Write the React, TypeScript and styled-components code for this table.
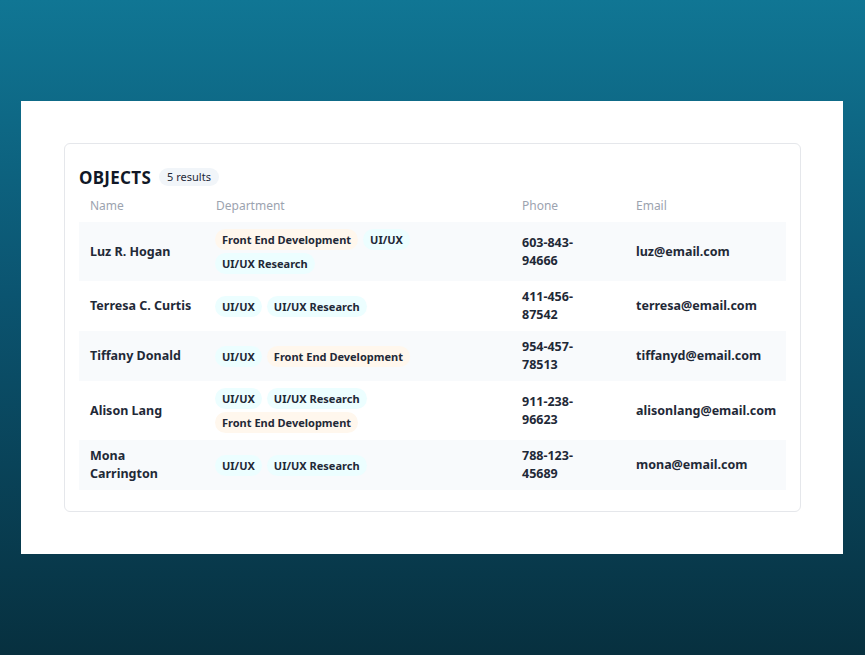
import React from "react";
import styled, { createGlobalStyle } from "styled-components";

const GlobalStyle = createGlobalStyle`
  html, body { margin: 0; padding: 0; }
  body {
    min-height: 100vh;
    background: linear-gradient(180deg, #107694 0%, #0b5470 45%, #07303f 100%);
    font-family: "Noto Sans", "Open Sans", sans-serif;
  }
`;

const Page = styled.div`
  min-height: 100vh;
  box-sizing: border-box;
  padding: 0 1px 0 0;
  display: flex;
  align-items: center;
  justify-content: center;
`;

const Panel = styled.div`
  width: 822px;
  box-sizing: border-box;
  background: #ffffff;
  padding: 42px 42px 42px 43px;
`;

const Card = styled.div`
  border: 1px solid #e5e7eb;
  border-radius: 6px;
  padding: 20px 14px 21px 14px;
`;

const TitleRow = styled.div`
  display: flex;
  align-items: center;
  gap: 8px;
  height: 26px;
`;

const Title = styled.h2`
  margin: 0;
  font-size: 17px;
  font-weight: 700;
  color: #111827;
  letter-spacing: 0.3px;
`;

const Count = styled.span`
  background: #f1f5f9;
  color: #1f2937;
  font-size: 11px;
  border-radius: 999px;
  padding: 1px 8px 2px;
`;

const Row = styled.div<{ $striped?: boolean; $header?: boolean }>`
  display: grid;
  grid-template-columns: 126px 306px 114px 1fr;
  align-items: center;
  background: ${(p) => (p.$striped ? "#f8fafc" : "transparent")};
  color: ${(p) => (p.$header ? "#9ca3af" : "#1f2937")};
  font-size: ${(p) => (p.$header ? "12px" : "12.5px")};
  font-weight: ${(p) => (p.$header ? 400 : 700)};
`;

const Cell = styled.div<{ $maxText?: number }>`
  padding: 7px 11px;
  line-height: 18px;
  white-space: pre-line;
  & > span {
    display: inline-block;
    max-width: ${(p) => (p.$maxText ? `${p.$maxText}px` : "none")};
  }
`;

const Tags = styled.div`
  display: flex;
  flex-wrap: wrap;
  gap: 3px 5px;
  padding: 7px 11px 7px 10px;
`;

const Tag = styled.span<{ $tone: "orange" | "cyan" }>`
  display: inline-flex;
  align-items: center;
  height: 21px;
  padding: 0 7px;
  border-radius: 999px;
  font-size: 11px;
  font-weight: 700;
  color: #1f2937;
  background: ${(p) => (p.$tone === "orange" ? "#fff7ed" : "#ecfeff")};
`;

type Person = {
  name: string;
  tags: string[];
  phone: string;
  email: string;
};

const people: Person[] = [
  { name: "Luz R. Hogan", tags: ["Front End Development", "UI/UX", "UI/UX Research"], phone: "603-843-94666", email: "luz@email.com" },
  { name: "Terresa C. Curtis", tags: ["UI/UX", "UI/UX Research"], phone: "411-456-87542", email: "terresa@email.com" },
  { name: "Tiffany Donald", tags: ["UI/UX", "Front End Development"], phone: "954-457-78513", email: "tiffanyd@email.com" },
  { name: "Alison Lang", tags: ["UI/UX", "UI/UX Research", "Front End Development"], phone: "911-238-96623", email: "alisonlang@email.com" },
  { name: "Mona\nCarrington", tags: ["UI/UX", "UI/UX Research"], phone: "788-123-45689", email: "mona@email.com" },
];

export default function App() {
  return (
    <>
      <GlobalStyle />
      <Page>
        <Panel>
          <Card>
            <TitleRow>
              <Title>OBJECTS</Title>
              <Count>5 results</Count>
            </TitleRow>
            <Row $header>
              <Cell>Name</Cell>
              <Cell>Department</Cell>
              <Cell>Phone</Cell>
              <Cell>Email</Cell>
            </Row>
            {people.map((p, i) => (
              <Row key={p.email} $striped={i % 2 === 0}>
                <Cell $maxText={110}>
                  <span>{p.name}</span>
                </Cell>
                <Tags>
                  {p.tags.map((t) => (
                    <Tag key={t} $tone={t === "Front End Development" ? "orange" : "cyan"}>
                      {t}
                    </Tag>
                  ))}
                </Tags>
                <Cell $maxText={66}>
                  <span>{p.phone}</span>
                </Cell>
                <Cell>{p.email}</Cell>
              </Row>
            ))}
          </Card>
        </Panel>
      </Page>
    </>
  );
}
